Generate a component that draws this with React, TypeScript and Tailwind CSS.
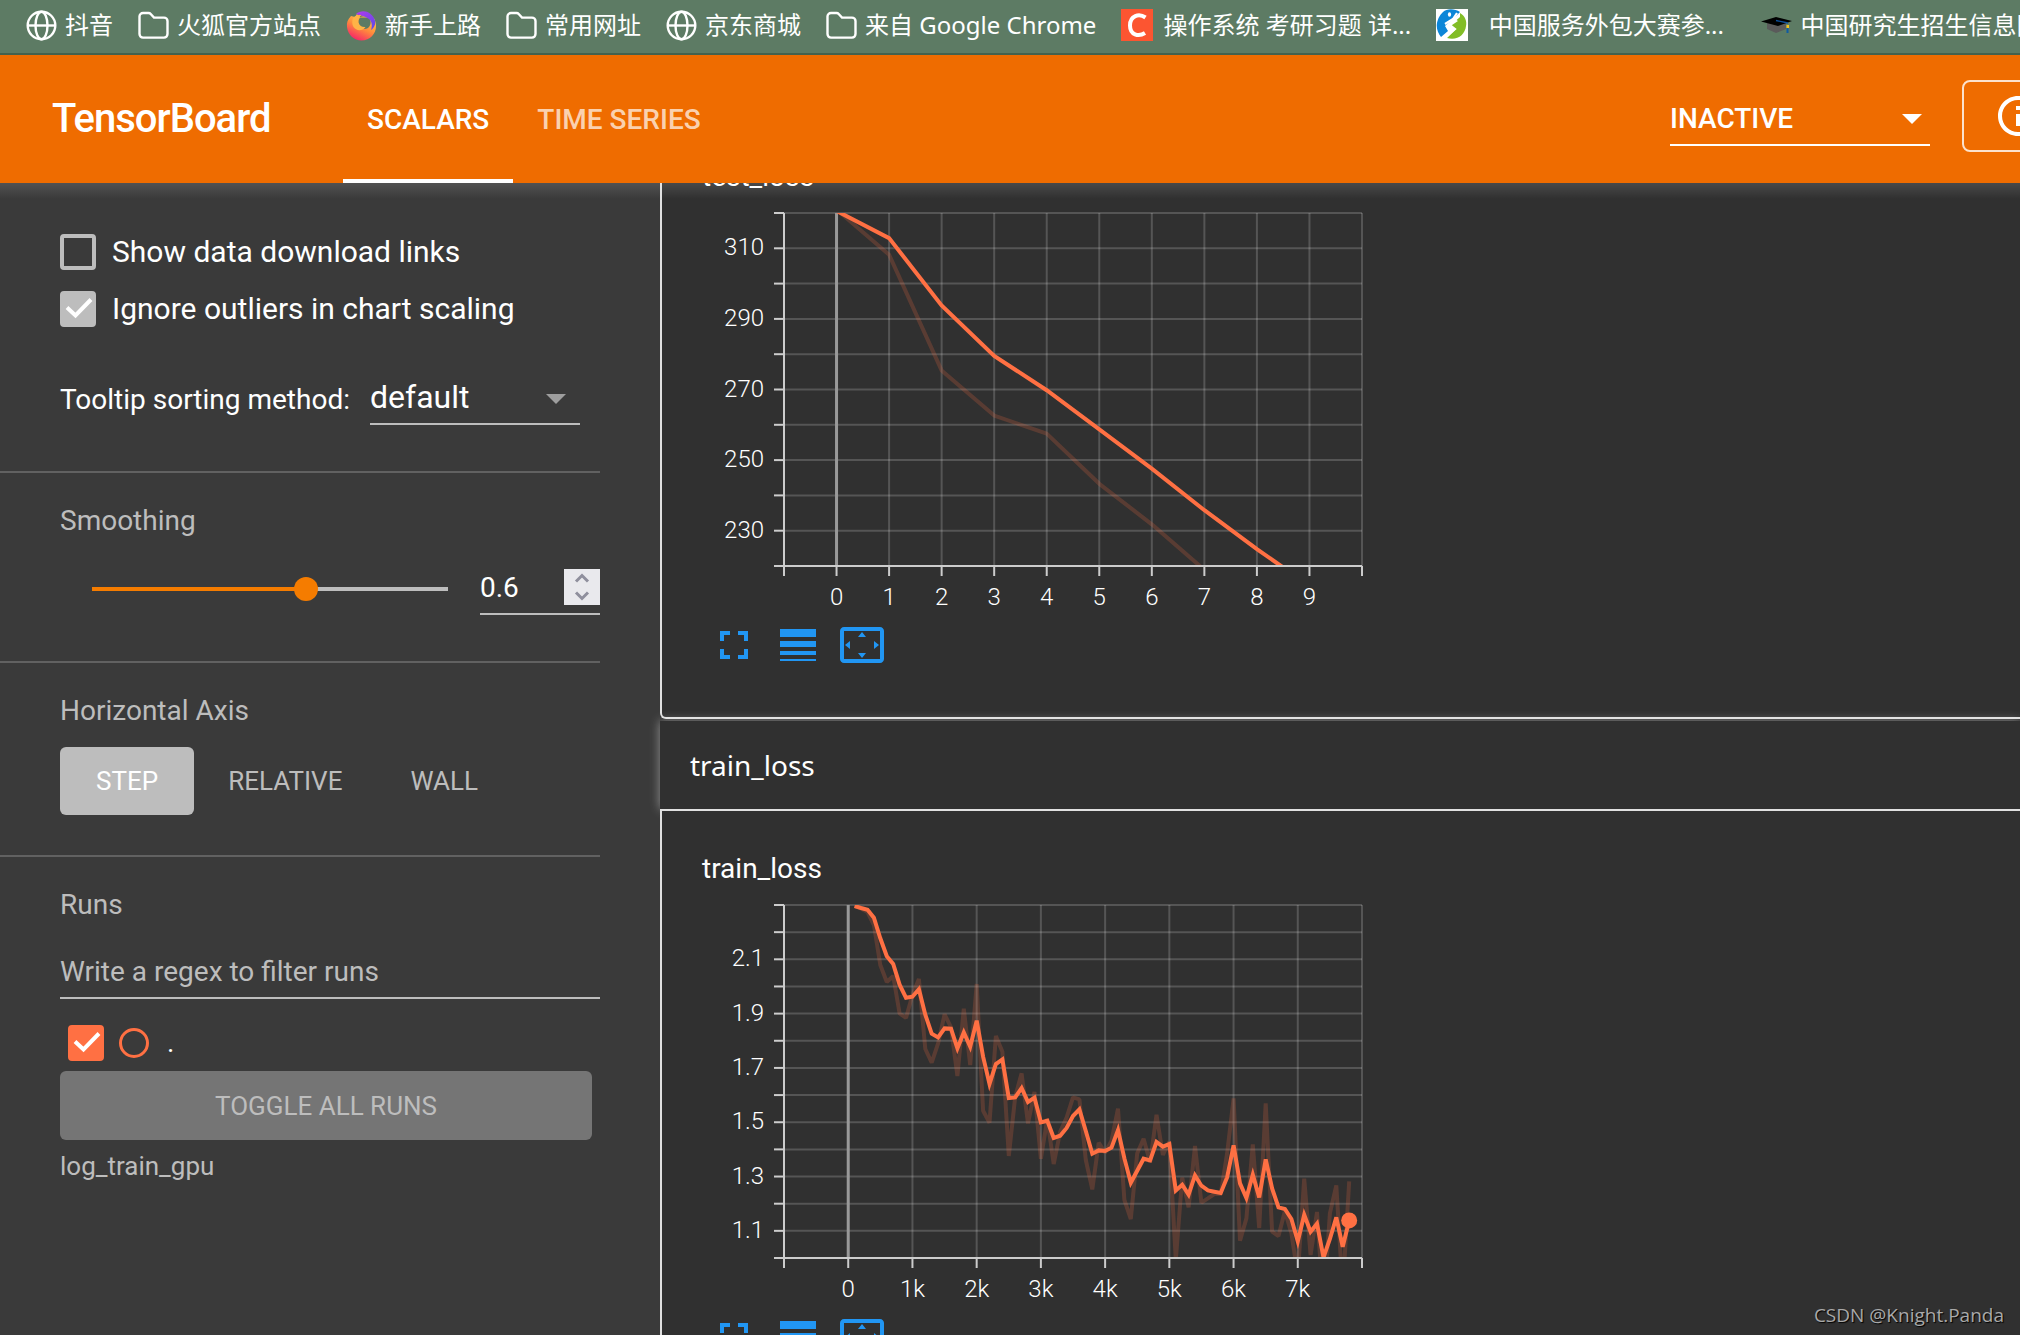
import React, { useState } from "react";

/* ---------- data ---------- */

const testSmoothed = [320.6, 312.9, 293.8, 279.5, 269.8, 258.7, 247.6, 235.8, 224.8, 214.4];
const testRaw = [321, 308.2, 275.4, 262.6, 257.5, 243.3, 231.8, 218.9];

// one sample every 100 steps, loss is stored as an offset below 2.3555 (814.5 units per 1.0)
const trainSmoothed = [
  48, 54, 59, 83, 145, 199, 222, 284, 323, 320, 298, 374, 431, 442, 415, 416, 475, 427, 470, 392,
  500, 582, 522, 508, 624, 622, 594, 636, 623, 697, 692, 744, 737, 714, 678, 658, 723, 791, 781,
  783, 773, 720, 805, 878, 842, 806, 811, 756, 770, 762, 901, 884, 914, 856, 887, 901, 905, 909,
  862, 766, 880, 924, 854, 922, 808, 895, 952, 957, 987, 1054, 974, 1025, 1001, 1102, 1047, 982,
  1070, 991,
];
const trainRaw = [
  48, 56, 66, 105, 225, 276, 258, 370, 384, 315, 267, 477, 518, 460, 373, 412, 558, 356, 525, 282,
  662, 698, 438, 485, 798, 620, 550, 700, 606, 806, 686, 822, 725, 683, 622, 628, 810, 898, 758,
  788, 752, 656, 930, 987, 790, 746, 817, 674, 795, 755, 1110, 863, 952, 768, 938, 925, 912, 912,
  790, 625, 1052, 985, 763, 1014, 640, 1025, 1038, 963, 1030, 1155, 866, 1095, 966, 1253, 970, 886,
  1202, 874,
];

const toLoss = (v: number) => 2.3 - (v - 45) / 814.5;

type Point = [number, number];

type ChartData = {
  title: string;
  xDomain: Point;
  yDomain: Point;
  xTicks: { at: number; label?: string }[];
  yTicks: { at: number; label?: string }[];
  smoothed: Point[];
  raw: Point[];
  dot?: boolean;
};

const testChart: ChartData = {
  title: "test_loss",
  xDomain: [-1, 10],
  yDomain: [220, 320],
  xTicks: Array.from({ length: 12 }, (_, i) => ({
    at: i - 1,
    label: i > 0 && i < 11 ? String(i - 1) : undefined,
  })),
  yTicks: Array.from({ length: 11 }, (_, i) => ({
    at: 220 + i * 10,
    label: i % 2 ? String(220 + i * 10) : undefined,
  })),
  smoothed: testSmoothed.map((v, i) => [i, v]),
  raw: testRaw.map((v, i) => [i, v]),
};

const trainChart: ChartData = {
  title: "train_loss",
  xDomain: [-1000, 8000],
  yDomain: [1, 2.3],
  xTicks: Array.from({ length: 10 }, (_, i) => ({
    at: (i - 1) * 1000,
    label: i === 1 ? "0" : i > 1 && i < 9 ? `${i - 1}k` : undefined,
  })),
  yTicks: Array.from({ length: 14 }, (_, i) => ({
    at: 1 + i / 10,
    label: i % 2 && i < 13 ? (1 + i / 10).toFixed(1) : undefined,
  })),
  smoothed: trainSmoothed.map((v, i) => [(i + 1) * 100, toLoss(v)]),
  raw: trainRaw.map((v, i) => [(i + 1) * 100, toLoss(v)]),
  dot: true,
};

/* ---------- bookmark icons ---------- */

const GlobeIcon = () => (
  <svg width="31" height="31" viewBox="0 0 31 31" fill="none" stroke="#fff" strokeWidth="2.4">
    <circle cx="15.5" cy="15.5" r="13.8" />
    <ellipse cx="15.5" cy="15.5" rx="6" ry="13.8" />
    <path d="M2 15.5h27" />
  </svg>
);

const FolderIcon = () => (
  <svg width="31" height="31" viewBox="0 0 31 31" fill="none" stroke="#fff" strokeWidth="2.4">
    <path d="M1.5 6.500a3.500 3.500 0 0 1 3.500-3.500h5.500a3 3 0 0 1 2.200 1l3.300 3.600h10a3.500 3.500 0 0 1 3.500 3.500v13a3.500 3.500 0 0 1-3.500 3.500h-21a3.500 3.500 0 0 1-3.500-3.500z" />
  </svg>
);

const FirefoxIcon = () => (
  <svg width="31" height="31" viewBox="0 0 31 31">
    <defs>
      <linearGradient id="fx" x1="0.8" y1="0.1" x2="0.3" y2="1">
        <stop offset="0" stopColor="#ffcf4a" />
        <stop offset="0.5" stopColor="#ff8a3c" />
        <stop offset="1" stopColor="#f5226a" />
      </linearGradient>
      <linearGradient id="fxp" x1="0" y1="0" x2="1" y2="1">
        <stop offset="0" stopColor="#b33bf0" />
        <stop offset="1" stopColor="#5b4be6" />
      </linearGradient>
    </defs>
    <path fill="url(#fx)" d="M5 6C1.500 9.500.5 13 1 17c1 8 7 13.500 14.500 13.500C24 30.500 30 24 30 16c0-3-.8-5.500-2-7.500L24 5l-10 2-3-3-2 3z" />
    <path fill="#5d7b64" d="M14 7.500c-2 3-2.500 6.500 0 9.500 2.500 2.500 7 2.500 9 0 2.500-3 2-7-.5-9.500z" />
    <path fill="url(#fxp)" d="M10 4C14 .5 20 .5 24 3.500c4 3 6 7.500 5 11-1 3-2.500 4.500-4 5.500 1.500-4 1-8.500-2-11C20 6.500 15 6 10 4z" />
    <path fill="#ffb347" d="M7 8c2-2.500 5-3.500 8.500-3-2.500 1.500-3.800 4.500-3 7.500 1 3.500 4 5 7 4.500-3 4.500-9.500 4-12 0-1.500-2.500-1.700-6-.5-9z" />
  </svg>
);

const CsdnIcon = () => (
  <svg width="32" height="32" viewBox="0 0 32 32" className="mr-0.5">
    <path fill="#fc5531" d="M0 0h32v32H0z" />
    <path fill="none" stroke="#fff" strokeWidth="4" d="M24.500 8.500C18 4 9 6.500 9 16.500c0 9.500 8.500 11.500 15 7.500" />
  </svg>
);

const RunnerIcon = () => (
  <svg width="32" height="32" viewBox="0 0 32 32">
    <path fill="#fff" d="M0 0h32v32H0z" />
    <path fill="#0b86d8" d="M7 3c4-4 12-3.500 17 0l-6 6-9 8 3 5-7 6C2 24 0 19 1 14 2 10 3 7 7 3z" />
    <path fill="#82bd26" d="M24 4c5 3 7 8 6 13-1 9-9 15-19 12l9-9-6-3 10-9z" />
    <ellipse cx="13.500" cy="5.500" rx="1.600" ry="2.200" fill="#fff" />
    <path fill="none" stroke="#fff" strokeWidth="2.200" d="M21 4l-4 6-8 5M17 10l3 2-6 4 5 4-9 8" />
  </svg>
);

const CapIcon = () => (
  <svg width="31" height="17" viewBox="0 0 31 17">
    <path fill="#5a5a5a" d="M6 6h19v6l-10 4-9-4z" />
    <path fill="#000" d="M0 4.500L15 0l16 4-14 5z" />
    <path fill="none" stroke="#0d4f9c" strokeWidth="1.300" d="M15 3.500L27 6" />
    <path fill="#f2c21a" d="M25.500 8h2.500v3h-2.500z" />
    <path fill="#0d5ba5" d="M25.500 11h2v5h-2z" />
  </svg>
);

function Bookmarks() {
  return (
    <nav className="flex h-[55px] items-start overflow-hidden border-b-2 border-[#44614d] bg-[#5d7b64] pt-[7px] pl-[26px] font-['Noto_Sans','Noto_Sans_CJK_SC',sans-serif] text-2xl/9 whitespace-pre text-white">
      <ul className="flex items-center gap-[25px]">
        <Bookmark icon={<GlobeIcon />} label="抖音" />
        <Bookmark icon={<FolderIcon />} label="火狐官方站点" />
        <Bookmark icon={<FirefoxIcon />} label="新手上路" />
        <Bookmark icon={<FolderIcon />} label="常用网址" />
        <Bookmark icon={<GlobeIcon />} label="京东商城" />
        <Bookmark icon={<FolderIcon />} label="来自 Google Chrome" />
        <Bookmark icon={<CsdnIcon />} label="操作系统 考研习题 详..." />
        <Bookmark icon={<RunnerIcon />} label="  中国服务外包大赛参...  " />
        <Bookmark icon={<CapIcon />} label="中国研究生招生信息网" />
      </ul>
    </nav>
  );
}

function Bookmark({ icon, label }: { icon: React.ReactNode; label: string }) {
  return (
    <li>
      <a href="#" className="flex shrink-0 items-center gap-2">
        {icon}
        {label}
      </a>
    </li>
  );
}

/* ---------- small controls ---------- */

function Caret({ className }: { className: string }) {
  return (
    <svg viewBox="0 0 20 10" className={className} fill="currentColor">
      <path d="M0 0h20L10 10z" />
    </svg>
  );
}

function CheckMark() {
  return (
    <svg
      viewBox="0 0 36 36"
      className="pointer-events-none col-start-1 row-start-1 hidden size-9 peer-checked:block"
      fill="none"
      stroke="#fff"
      strokeWidth="4"
    >
      <path d="M7 16.500l8.500 8L31 8.500" />
    </svg>
  );
}

function SettingCheckbox({ label, initial }: { label: string; initial: boolean }) {
  const [checked, setChecked] = useState(initial);
  return (
    <label className="flex h-9 items-center gap-4 text-[30px]/9 text-white">
      <span className="grid">
        <input
          type="checkbox"
          checked={checked}
          onChange={(e) => setChecked(e.target.checked)}
          className="peer col-start-1 row-start-1 size-9 appearance-none rounded border-4 border-[#bdbdbd] checked:bg-[#bdbdbd]"
        />
        <CheckMark />
      </span>
      {label}
    </label>
  );
}

function SectionTitle({ children }: { children: React.ReactNode }) {
  return <h3 className="text-[28px]/9 text-[#bdbdbd]">{children}</h3>;
}

/* ---------- header ---------- */

function Header() {
  const [tab, setTab] = useState("SCALARS");
  return (
    <header className="relative z-10 flex h-32 shrink-0 items-center overflow-hidden bg-[#ef6c00] text-white">
      <h1 className="w-[290px] shrink-0 pl-[52px] text-[40px] font-medium tracking-tight">TensorBoard</h1>
      <div className="flex h-full flex-1 pl-[53px]">
        {["SCALARS", "TIME SERIES"].map((t) => (
          <button
            key={t}
            onClick={() => setTab(t)}
            className={
              t === tab
                ? "border-b-4 border-white px-6 pt-1.5 text-[28px] font-medium"
                : "border-b-4 border-transparent px-6 pt-1.5 text-[28px] font-medium text-white/70"
            }
          >
            {t}
          </button>
        ))}
      </div>
      <div className="grid w-[260px] shrink-0 items-center">
        <select
          aria-label="Inactive plugins"
          className="col-start-1 row-start-1 h-[54px] appearance-none border-b-2 border-white bg-transparent pt-0.5 text-[28px] font-medium outline-none"
        >
          <option>INACTIVE</option>
        </select>
        <Caret className="pointer-events-none col-start-1 row-start-1 mr-2 w-5 justify-self-end" />
      </div>
      <button
        aria-label="Info"
        className="mt-[25px] -mr-[70px] ml-8 flex h-[72px] w-32 shrink-0 items-center self-start rounded-lg border-2 border-white/80 pl-[30px]"
      >
        <svg viewBox="0 0 24 24" className="size-12" fill="currentColor">
          <path d="M11 7h2v2h-2zm0 4h2v6h-2zm1-9C6.480 2 2 6.480 2 12s4.480 10 10 10 10-4.480 10-10S17.520 2 12 2zm0 18c-4.410 0-8-3.590-8-8s3.590-8 8-8 8 3.590 8 8-3.590 8-8 8z" />
        </svg>
      </button>
    </header>
  );
}

/* ---------- sidebar ---------- */

function Sidebar() {
  const [smoothing, setSmoothing] = useState(0.6);
  const [axis, setAxis] = useState("STEP");
  const [filter, setFilter] = useState("");

  const step = (d: number) => setSmoothing((s) => Math.min(1, Math.max(0, Number((s + d).toFixed(1)))));

  return (
    <aside className="w-[660px] shrink-0 bg-[#3a3a3a] pr-[60px]">
      <section className="border-b-2 border-[#616161] pt-[51px] pb-[46px] pl-[60px]">
        <div className="flex flex-col gap-[21px]">
          <SettingCheckbox label="Show data download links" initial={false} />
          <SettingCheckbox label="Ignore outliers in chart scaling" initial={true} />
        </div>
        <div className="mt-[46px] flex items-center text-[28px]/9 text-white">
          <label htmlFor="sorting" className="w-[310px] pt-0.5">
            Tooltip sorting method:
          </label>
          <div className="grid w-[210px] items-center">
            <select
              id="sorting"
              className="col-start-1 row-start-1 h-[52px] appearance-none border-b-2 border-[#bdbdbd] bg-transparent pb-0.5 text-[32px] outline-none"
            >
              <option>default</option>
              <option>descending</option>
              <option>ascending</option>
              <option>nearest</option>
            </select>
            <Caret className="pointer-events-none col-start-1 row-start-1 mr-3.5 w-5 justify-self-end text-[#9e9e9e]" />
          </div>
        </div>
      </section>

      <section className="border-b-2 border-[#616161] pt-[30px] pb-[46px] pl-[60px]">
        <SectionTitle>Smoothing</SectionTitle>
        <div className="mt-[26px] flex items-center pl-5">
          <input
            type="range"
            aria-label="Smoothing"
            min={0}
            max={1}
            step={0.1}
            value={smoothing}
            onChange={(e) => setSmoothing(Number(e.target.value))}
            style={{
              // the track is inset by half a thumb on both ends
              backgroundImage: `linear-gradient(to right, transparent 12px, #f57c00 12px calc(12px + (100% - 24px) * ${smoothing}), #bdbdbd 0 calc(100% - 12px), transparent 0)`,
            }}
            className="mb-0.5 h-1 min-w-0 flex-1 appearance-none [&::-webkit-slider-thumb]:size-6 [&::-webkit-slider-thumb]:appearance-none [&::-webkit-slider-thumb]:rounded-full [&::-webkit-slider-thumb]:bg-[#f57c00]"
          />
          <div className="ml-5 flex h-[50px] w-[120px] items-center justify-between border-b-2 border-[#bdbdbd]">
            <input
              type="number"
              aria-label="Smoothing value"
              step={0.1}
              value={smoothing}
              onChange={(e) => setSmoothing(Number(e.target.value))}
              className="mb-0.5 w-20 appearance-none bg-transparent text-[28px] text-white outline-none [&::-webkit-inner-spin-button]:appearance-none"
            />
            <div className="mb-1 flex h-9 w-9 shrink-0 flex-col bg-[#e9e9ed] text-[#8f8f9d]">
              <button aria-label="Increase" onClick={() => step(0.1)} className="flex flex-1 items-center justify-center">
                <svg width="16" height="10" viewBox="0 0 16 10" fill="none" stroke="currentColor" strokeWidth="3">
                  <path d="M2 8.500l6-6 6 6" />
                </svg>
              </button>
              <button aria-label="Decrease" onClick={() => step(-0.1)} className="flex flex-1 items-center justify-center">
                <svg width="16" height="10" viewBox="0 0 16 10" fill="none" stroke="currentColor" strokeWidth="3">
                  <path d="M2 1.500l6 6 6-6" />
                </svg>
              </button>
            </div>
          </div>
        </div>
      </section>

      <section className="border-b-2 border-[#616161] pt-[30px] pb-10 pl-[60px]">
        <SectionTitle>Horizontal Axis</SectionTitle>
        <div className="mt-[18px] flex">
          {["STEP", "RELATIVE", "WALL"].map((a) => (
            <button
              key={a}
              onClick={() => setAxis(a)}
              className={
                a === axis
                  ? "h-[68px] rounded-md bg-[#bdbdbd] px-9 text-[26px] text-white"
                  : "h-[68px] rounded-md px-[34px] text-[26px] text-[#bdbdbd]"
              }
            >
              {a}
            </button>
          ))}
        </div>
      </section>

      <section className="pt-[30px] pl-[60px]">
        <SectionTitle>Runs</SectionTitle>
        <input
          type="text"
          aria-label="Filter runs"
          value={filter}
          onChange={(e) => setFilter(e.target.value)}
          placeholder="Write a regex to filter runs"
          className="mt-[26px] h-[50px] w-full border-b-2 border-[#bdbdbd] bg-transparent pb-1 text-[28px] text-white outline-none placeholder:text-[#bdbdbd]"
        />
        <div className="mt-[26px] flex h-9 items-center pl-2">
          <span className="grid">
            <input
              id="run"
              type="checkbox"
              defaultChecked
              className="peer col-start-1 row-start-1 size-9 appearance-none rounded border-4 border-[#ff7043] checked:bg-[#ff7043]"
            />
            <CheckMark />
          </span>
          <button aria-label="Show only this run" className="ml-[15px] size-[30px] rounded-full border-3 border-[#ff7043]" />
          <label htmlFor="run" className="ml-[18px] text-[28px]/9 text-white">
            .
          </label>
        </div>
        <button className="mt-2.5 mr-2 block h-[69px] w-[532px] rounded-md bg-[#757575] pt-0.5 text-[26px] text-[#bdbdbd]">
          TOGGLE ALL RUNS
        </button>
        <p className="mt-2 text-[26px]/9 text-[#bdbdbd]">log_train_gpu</p>
      </section>
    </aside>
  );
}

/* ---------- charts ---------- */

const LEFT = 82;
const TOP = 1;
const WIDTH = 578;
const HEIGHT = 353;

function Chart({ data }: { data: ChartData }) {
  const { xDomain, yDomain, title } = data;
  const sx = (v: number) => LEFT + ((v - xDomain[0]) / (xDomain[1] - xDomain[0])) * WIDTH;
  const sy = (v: number) => TOP + HEIGHT - ((v - yDomain[0]) / (yDomain[1] - yDomain[0])) * HEIGHT;
  const line = (pts: Point[]) => pts.map(([x, y]) => `${sx(x).toFixed(1)},${sy(y).toFixed(1)}`).join(" ");
  const last = data.smoothed[data.smoothed.length - 1];
  const bottom = TOP + HEIGHT;

  return (
    <svg width="662" height="400" viewBox="0 0 662 400" className="mt-[17px] block" role="img" aria-label={title}>
      <clipPath id={`clip-${title}`}>
        <rect x={LEFT} y={TOP} width={WIDTH} height={HEIGHT} />
      </clipPath>
      <g stroke="#fff" strokeOpacity="0.18" strokeWidth="2">
        {data.xTicks.slice(1).map((t) => (
          <path key={t.at} d={`M${sx(t.at)} ${TOP}V${bottom}`} />
        ))}
        {data.yTicks.slice(1).map((t) => (
          <path key={t.at} d={`M${LEFT} ${sy(t.at)}H${LEFT + WIDTH}`} />
        ))}
      </g>
      <path d={`M${sx(0)} ${TOP}V${bottom}`} stroke="#999" strokeWidth="3" />
      <g clipPath={`url(#clip-${title})`} fill="none" stroke="#ff7043" strokeWidth="4">
        <polyline points={line(data.raw)} strokeOpacity="0.2" strokeLinejoin="bevel" />
        <polyline points={line(data.smoothed)} />
      </g>
      <g stroke="#ccc" strokeWidth="2">
        <path d={`M${LEFT} ${TOP}V${bottom}`} />
        <path d={`M${LEFT} ${bottom}H${LEFT + WIDTH}`} />
        {data.xTicks.map((t) => (
          <path key={t.at} d={`M${sx(t.at)} ${bottom}v10`} />
        ))}
        {data.yTicks.map((t) => (
          <path key={t.at} d={`M${LEFT} ${sy(t.at)}h-10`} />
        ))}
      </g>
      <g fill="#fff" fontSize="24" fontWeight="300">
        {data.xTicks.map(
          (t) =>
            t.label && (
              <text key={t.at} x={sx(t.at)} y={bottom + 39} textAnchor="middle">
                {t.label}
              </text>
            ),
        )}
        {data.yTicks.map(
          (t) =>
            t.label && (
              <text key={t.at} x={LEFT - 20} y={sy(t.at) + 7} textAnchor="end">
                {t.label}
              </text>
            ),
        )}
      </g>
      {data.dot && <circle cx={sx(last[0])} cy={sy(last[1])} r="8" fill="#ff7043" />}
    </svg>
  );
}

function ChartPanel({ data, className = "" }: { data: ChartData; className?: string }) {
  return (
    <div className={`shrink-0 rounded-bl-md border-2 border-r-0 border-[#e0e0e0] pt-10 pb-[54px] pl-10 ${className}`}>
      <h4 className="text-[28px]/9 text-white">{data.title}</h4>
      <Chart data={data} />
      <div className="mt-[15px] flex items-center pl-[18px] text-[#2196f3]">
        <button aria-label="Toggle fullscreen">
          <svg width="28" height="28" viewBox="5 5 14 14" fill="currentColor">
            <path d="M7 14H5v5h5v-2H7v-3zm-2-4h2V7h3V5H5v5zm12 7h-3v2h5v-5h-2v3zM14 5v2h3v3h2V5h-5z" />
          </svg>
        </button>
        <button aria-label="Toggle y-axis log scale" className="ml-8">
          <svg width="36" height="32" viewBox="3 4 18 16" preserveAspectRatio="none" fill="currentColor">
            <path d="M3 17h18v-2H3v2zm0 3h18v-1H3v1zm0-7h18v-3H3v3zm0-9v4h18V4H3z" />
          </svg>
        </button>
        <button aria-label="Fit domain to data" className="ml-6">
          <svg width="44" height="36" viewBox="1 3 22 18" fill="currentColor">
            <path d="M12.010 5.500L10 8h4l-1.990-2.500zM18 10v4l2.500-1.990L18 10zM6 10l-2.500 2.010L6 14v-4zm8 6h-4l2.010 2.500L14 16zm7-13H3c-1.100 0-2 .9-2 2v14c0 1.100.9 2 2 2h18c1.100 0 2-.9 2-2V5c0-1.100-.9-2-2-2zm0 16.010H3V4.990h18v14.020z" />
          </svg>
        </button>
      </div>
    </div>
  );
}

function App() {
  return (
    <div className="relative flex h-screen flex-col overflow-hidden bg-[#303030] font-[Roboto,'Liberation_Sans',sans-serif]">
      <Bookmarks />
      <Header />
      <div className="relative flex min-h-0 flex-1 overflow-hidden">
        <Sidebar />
        {/* the pane is scrolled down a little, so the first title sits under the header */}
        <main className="flex min-w-0 flex-1 flex-col">
          <ChartPanel data={testChart} className="-mt-[66px]" />
          <h2 className="mt-0.5 h-[88px] shrink-0 bg-[#303030] pl-[30px] font-['Noto_Sans',sans-serif] text-[28px]/[88px] text-white shadow-[0_0_10px_rgba(255,255,255,0.45)]">
            train_loss
          </h2>
          <ChartPanel data={trainChart} className="relative bg-[#303030]" />
        </main>
        <div className="pointer-events-none absolute inset-x-0 top-0 h-4 bg-linear-to-b from-white/12 to-transparent" />
      </div>
      <p className="absolute right-4 bottom-2 font-['Open_Sans',sans-serif] text-[19px]/6 text-[#a9a9a9] text-shadow-[1px_1px_1px_#000]">
        CSDN @Knight.Panda
      </p>
    </div>
  );
}

export default App;
